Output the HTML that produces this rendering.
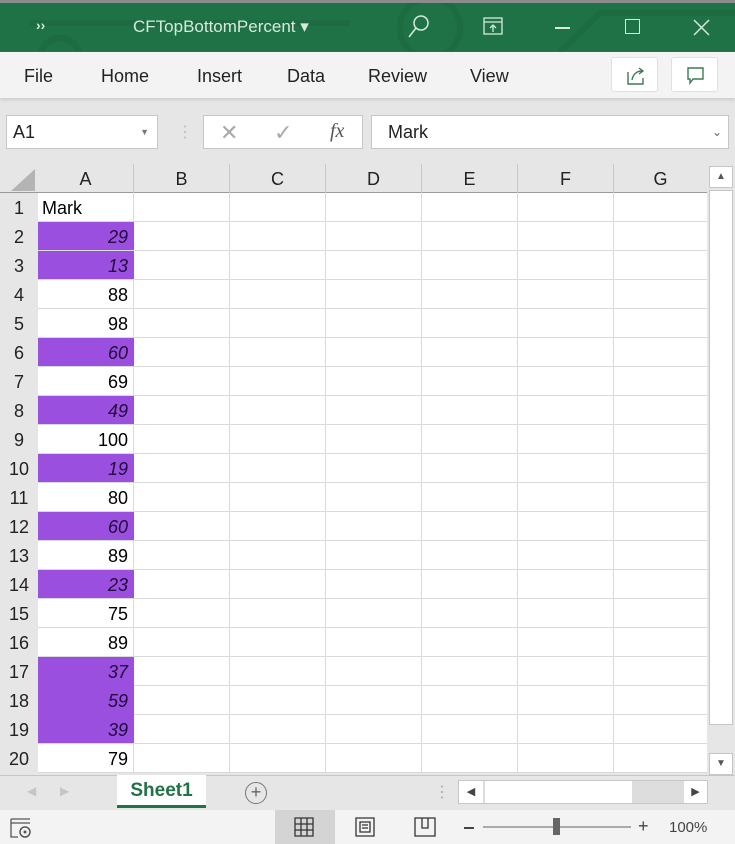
<!DOCTYPE html><html><head><meta charset="utf-8"><style>
*{margin:0;padding:0;box-sizing:border-box}
body{width:735px;height:844px;overflow:hidden;background:#e6e6e6;font-family:"Liberation Sans",sans-serif;position:relative}
.a{position:absolute}
.tabs span{position:absolute;top:66px;font-size:18px;color:#222}
.ch{position:absolute;top:164px;height:29px;line-height:30px;text-align:center;font-size:18px;color:#222;border-right:1px solid #c8c8c8}
.rh{position:absolute;left:0;width:38px;height:29px;line-height:30px;text-align:center;font-size:18px;color:#222;background:#e6e6e6}
.c{position:absolute;left:38px;width:96px;height:29px;line-height:30px;text-align:right;padding-right:6px;font-size:18px;color:#000}
.p{background:#9a4fdf;font-style:italic;color:#220a3a}
</style></head><body>
<div class="a" style="left:0;top:0;width:735px;height:3px;background:#8c8c8c"></div>
<div class="a" style="left:0;top:3px;width:735px;height:49px;background:#1f7246;overflow:hidden">
<svg width="735" height="49" style="position:absolute;left:0;top:0"><g stroke="#1c6b41" stroke-width="6" fill="none"><circle cx="430" cy="25" r="30"/><path d="M30 20 H350"/><path d="M560 49 L600 10 H735"/><circle cx="60" cy="55" r="20"/></g></svg>
<span class="a" style="left:36px;top:14px;color:#cfe8d8;font-size:14px;font-weight:bold">››</span>
<span class="a" style="left:133px;top:14px;color:#d6e9dd;font-size:17px">CFTopBottomPercent ▾</span>
<svg class="a" style="left:405px;top:10px" width="26" height="28"><circle cx="16" cy="10" r="7" stroke="#d6e9dd" stroke-width="1.5" fill="none"/><path d="M11 15 L4 24" stroke="#d6e9dd" stroke-width="1.5"/></svg>
<svg class="a" style="left:483px;top:14px" width="22" height="20"><rect x="1" y="1" width="18" height="16" stroke="#d6e9dd" fill="none" stroke-width="1.3"/><path d="M1 5H19M10 15V8M7 11L10 8L13 11" stroke="#d6e9dd" fill="none" stroke-width="1.3"/></svg>
<div class="a" style="left:555px;top:24px;width:15px;height:1.5px;background:#d6e9dd"></div>
<div class="a" style="left:625px;top:16px;width:15px;height:15px;border:1.5px solid #d6e9dd"></div>
<svg class="a" style="left:693px;top:16px" width="17" height="17"><path d="M1 1L16 16M16 1L1 16" stroke="#d6e9dd" stroke-width="1.5"/></svg>
</div>
<div class="a tabs" style="left:0;top:52px;width:735px;height:46px;background:#f3f3f3;box-shadow:0 2px 3px #ccc">
<span style="left:24px;top:14px">File</span><span style="left:101px;top:14px">Home</span><span style="left:197px;top:14px">Insert</span><span style="left:287px;top:14px">Data</span><span style="left:368px;top:14px">Review</span><span style="left:470px;top:14px">View</span>
<div class="a" style="left:611px;top:5px;width:47px;height:35px;background:#fff;border:1px solid #e0e0e0;border-radius:3px"><svg width="47" height="35"><path d="M16 14V26H31V20M20 22C21 16 25 13 30 13M27 10L31 13L27 16" stroke="#3c7a55" stroke-width="1.4" fill="none"/></svg></div>
<div class="a" style="left:671px;top:5px;width:47px;height:35px;background:#fff;border:1px solid #e0e0e0;border-radius:3px"><svg width="47" height="35"><path d="M16 10H31V21H21L18 25V21H16Z" stroke="#3c7a55" stroke-width="1.4" fill="none"/></svg></div>
</div>
<div class="a" style="left:6px;top:115px;width:152px;height:34px;background:#fff;border:1px solid #c6c6c6;font-size:18px;line-height:32px;padding-left:6px;color:#222">A1<span style="position:absolute;right:8px;font-size:9px;color:#777">▼</span></div>
<div class="a" style="left:177px;top:122px;color:#bbb;font-size:16px">⋮</div>
<div class="a" style="left:203px;top:115px;width:160px;height:34px;background:#fff;border:1px solid #c6c6c6">
<span class="a" style="left:16px;top:4px;color:#aaa;font-size:22px">✕</span><span class="a" style="left:70px;top:4px;color:#aaa;font-size:22px">✓</span><span class="a" style="left:126px;top:4px;font-family:'Liberation Serif',serif;font-style:italic;font-size:20px;color:#555">fx</span></div>
<div class="a" style="left:371px;top:115px;width:358px;height:34px;background:#fff;border:1px solid #c6c6c6;font-size:18px;line-height:32px;padding-left:16px;color:#222">Mark<span style="position:absolute;right:6px;font-size:12px;color:#666">⌄</span></div>
<div class="a" style="left:0;top:164px;width:707px;height:29px;background:#e6e6e6;border-bottom:1px solid #9a9a9a"></div>
<svg class="a" style="left:10px;top:168px" width="26" height="24"><path d="M25 1V23H1Z" fill="#b4b4b4"/></svg>
<div class="a" style="left:0;top:193px;width:38px;height:580px;background:#e6e6e6;border-right:1px solid #9a9a9a"></div>
<div class="a" style="left:38px;top:193px;width:669px;height:580px;background:#fff;background-image:repeating-linear-gradient(to bottom,transparent 0 28px,#dadada 28px 29px),repeating-linear-gradient(to right,transparent 0 95px,#dadada 95px 96px)"></div>
<div class="ch" style="left:38px;width:96px">A</div><div class="ch" style="left:134px;width:96px">B</div><div class="ch" style="left:230px;width:96px">C</div><div class="ch" style="left:326px;width:96px">D</div><div class="ch" style="left:422px;width:96px">E</div><div class="ch" style="left:518px;width:96px">F</div><div class="ch" style="left:614px;width:93px;border:none">G</div>
<div class="rh" style="top:193px">1</div><div class="c" style="top:193px;text-align:left;padding-left:4px">Mark</div>
<div class="rh" style="top:222px">2</div><div class="c p" style="top:222px;height:28px">29</div>
<div class="rh" style="top:251px">3</div><div class="c p" style="top:251px;height:28px">13</div>
<div class="rh" style="top:280px">4</div><div class="c" style="top:280px">88</div>
<div class="rh" style="top:309px">5</div><div class="c" style="top:309px">98</div>
<div class="rh" style="top:338px">6</div><div class="c p" style="top:338px;height:28px">60</div>
<div class="rh" style="top:367px">7</div><div class="c" style="top:367px">69</div>
<div class="rh" style="top:396px">8</div><div class="c p" style="top:396px;height:28px">49</div>
<div class="rh" style="top:425px">9</div><div class="c" style="top:425px">100</div>
<div class="rh" style="top:454px">10</div><div class="c p" style="top:454px;height:28px">19</div>
<div class="rh" style="top:483px">11</div><div class="c" style="top:483px">80</div>
<div class="rh" style="top:512px">12</div><div class="c p" style="top:512px;height:28px">60</div>
<div class="rh" style="top:541px">13</div><div class="c" style="top:541px">89</div>
<div class="rh" style="top:570px">14</div><div class="c p" style="top:570px;height:28px">23</div>
<div class="rh" style="top:599px">15</div><div class="c" style="top:599px">75</div>
<div class="rh" style="top:628px">16</div><div class="c" style="top:628px">89</div>
<div class="rh" style="top:657px">17</div><div class="c p" style="top:657px;height:29px">37</div>
<div class="rh" style="top:686px">18</div><div class="c p" style="top:686px;height:29px">59</div>
<div class="rh" style="top:715px">19</div><div class="c p" style="top:715px;height:28px">39</div>
<div class="rh" style="top:744px">20</div><div class="c" style="top:744px">79</div>
<div class="a" style="left:707px;top:164px;width:28px;height:611px;background:#e6e6e6"></div>
<div class="a" style="left:709px;top:166px;width:24px;height:22px;background:#fff;border:1px solid #c6c6c6;text-align:center;font-size:10px;line-height:20px;color:#555">▲</div>
<div class="a" style="left:709px;top:190px;width:24px;height:535px;background:#fff;border:1px solid #c6c6c6"></div>
<div class="a" style="left:709px;top:753px;width:24px;height:22px;background:#fff;border:1px solid #c6c6c6;text-align:center;font-size:10px;line-height:20px;color:#555">▼</div>
<div class="a" style="left:0;top:775px;width:735px;height:35px;background:#e6e6e6;border-top:1px solid #c6c6c6"></div>
<span class="a" style="left:27px;top:784px;color:#c6c6c6;font-size:12px">◀</span><span class="a" style="left:60px;top:784px;color:#c6c6c6;font-size:12px">▶</span>
<div class="a" style="left:117px;top:775px;width:89px;height:33px;background:#fff;border-bottom:3px solid #217346;text-align:center;font-weight:bold;color:#217346;font-size:19px;line-height:32px">Sheet1</div>
<div class="a" style="left:245px;top:782px;width:22px;height:22px;border:1.5px solid #777;border-radius:50%;text-align:center;line-height:19px;color:#666;font-size:18px">+</div>
<span class="a" style="left:434px;top:782px;color:#aaa;font-size:16px">⋮</span>
<div class="a" style="left:458px;top:780px;width:250px;height:24px;background:#ddd;border:1px solid #c6c6c6"></div>
<div class="a" style="left:459px;top:781px;width:24px;height:22px;background:#fff;font-size:11px;text-align:center;line-height:22px;color:#444">◀</div>
<div class="a" style="left:485px;top:781px;width:147px;height:22px;background:#fff"></div>
<div class="a" style="left:684px;top:781px;width:23px;height:22px;background:#fff;font-size:11px;text-align:center;line-height:22px;color:#444">▶</div>
<div class="a" style="left:0;top:810px;width:735px;height:34px;background:#f3f3f3"></div>
<svg class="a" style="left:10px;top:817px" width="24" height="22"><path d="M1 2H20M1 6H20M1 2V20H8" stroke="#555" fill="none" stroke-width="1.3"/><circle cx="15" cy="15" r="5" stroke="#555" fill="none" stroke-width="1.5"/><circle cx="15" cy="15" r="1.5" fill="#555"/></svg>
<div class="a" style="left:275px;top:810px;width:60px;height:34px;background:#d4d4d4"></div>
<svg class="a" style="left:294px;top:817px" width="20" height="20"><path d="M1 1H19V19H1ZM1 7H19M1 13H19M7 1V19M13 1V19" stroke="#333" fill="none" stroke-width="1.3"/></svg>
<svg class="a" style="left:355px;top:817px" width="20" height="20"><path d="M1 1H19V19H1ZM5 5H15V15H5ZM7 8H13M7 11H13" stroke="#333" fill="none" stroke-width="1.3"/></svg>
<svg class="a" style="left:414px;top:817px" width="22" height="20"><path d="M1 1H21V19H1ZM8 1V11H14V1" stroke="#333" fill="none" stroke-width="1.3"/></svg>
<div class="a" style="left:464px;top:827px;width:10px;height:1.5px;background:#444"></div>
<div class="a" style="left:483px;top:826px;width:148px;height:2px;background:#aaa"></div>
<div class="a" style="left:553px;top:818px;width:7px;height:17px;background:#666"></div>
<span class="a" style="left:638px;top:816px;font-size:18px;color:#444">+</span>
<span class="a" style="left:669px;top:819px;font-size:15px;color:#444">100%</span>
</body></html>
